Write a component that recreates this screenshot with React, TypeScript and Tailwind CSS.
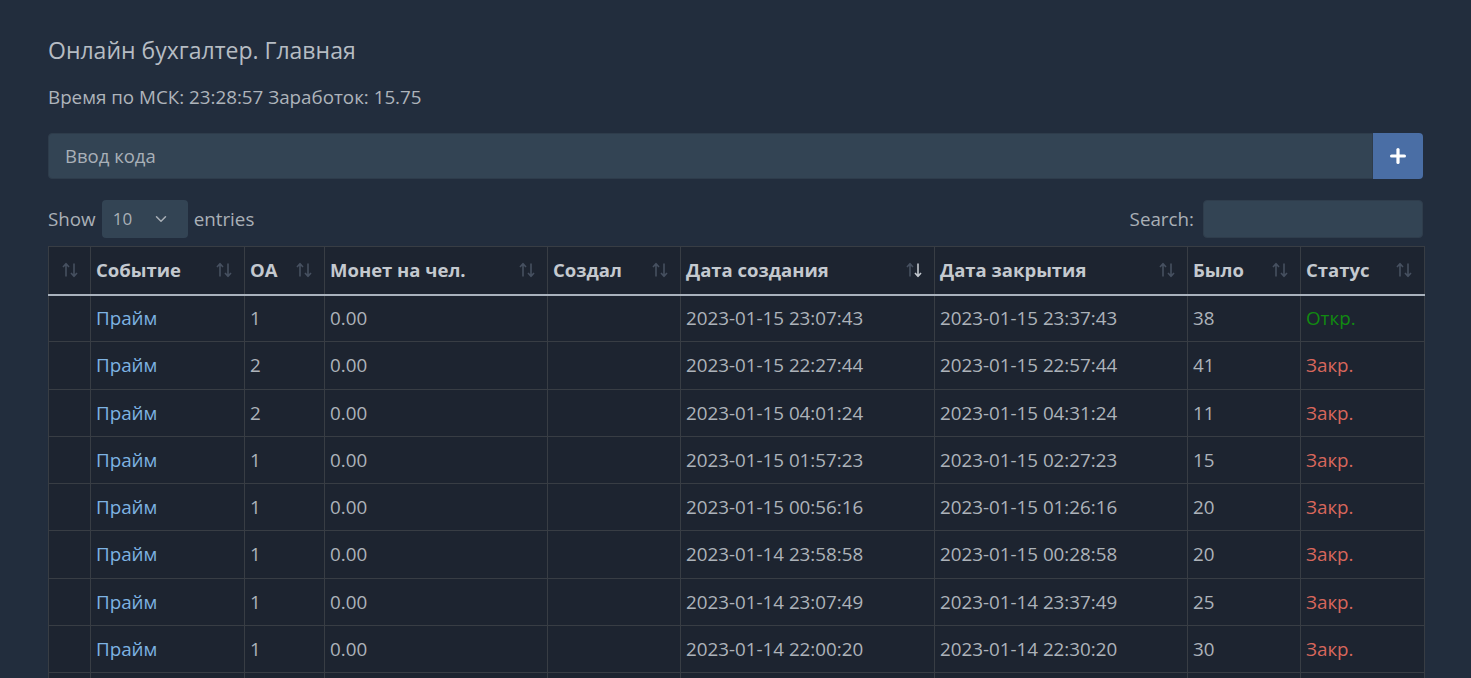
import { ChevronDown, Plus } from 'lucide-react';

type Row = {
	oa: number;
	created: string;
	closed: string;
	was: number;
	open: boolean;
};

const rows: Row[] = [
	{ oa: 1, created: '2023-01-15 23:07:43', closed: '2023-01-15 23:37:43', was: 38, open: true },
	{ oa: 2, created: '2023-01-15 22:27:44', closed: '2023-01-15 22:57:44', was: 41, open: false },
	{ oa: 2, created: '2023-01-15 04:01:24', closed: '2023-01-15 04:31:24', was: 11, open: false },
	{ oa: 1, created: '2023-01-15 01:57:23', closed: '2023-01-15 02:27:23', was: 15, open: false },
	{ oa: 1, created: '2023-01-15 00:56:16', closed: '2023-01-15 01:26:16', was: 20, open: false },
	{ oa: 1, created: '2023-01-14 23:58:58', closed: '2023-01-15 00:28:58', was: 20, open: false },
	{ oa: 1, created: '2023-01-14 23:07:49', closed: '2023-01-14 23:37:49', was: 25, open: false },
	{ oa: 1, created: '2023-01-14 22:00:20', closed: '2023-01-14 22:30:20', was: 30, open: false },
	{ oa: 1, created: '2023-01-14 21:12:05', closed: '2023-01-14 21:42:05', was: 18, open: false },
	{ oa: 2, created: '2023-01-14 20:03:51', closed: '2023-01-14 20:33:51', was: 22, open: false },
];

const columns = [
	{ title: '', w: 'w-[42px]' },
	{ title: 'Событие', w: 'w-[154px]' },
	{ title: 'OA', w: 'w-[80px]' },
	{ title: 'Монет на чел.', w: 'w-[223px]' },
	{ title: 'Создал', w: 'w-[133px]' },
	{ title: 'Дата создания', w: 'w-[254px]', sorted: true },
	{ title: 'Дата закрытия', w: 'w-[253px]' },
	{ title: 'Было', w: 'w-[113px]' },
	{ title: 'Статус', w: 'w-[124px]' },
];

// two thin arrows like the DataTables sorting glyphs
const SortIcon = ({ active }: { active?: boolean }) => (
	<svg
		className="absolute right-[12px] top-1/2 -translate-y-1/2"
		width="16"
		height="15"
		viewBox="0 0 16 15"
		fill="none"
		strokeWidth="1.6"
	>
		<path d="M4 14V1.5M1 4.5L4 1.2L7 4.5" stroke="#465060" />
		<path
			d="M12 1V13.5M9 10.5L12 13.8L15 10.5"
			stroke={active ? '#c3c8cf' : '#465060'}
		/>
	</svg>
);

const cell = 'border border-[#383d44] px-[5px]';

export default function App() {
	return (
		<div
			className="min-h-screen bg-[#222d3d] px-12 pt-[36px] text-[#adb3ba]"
			style={{ fontFamily: '"Open Sans", "Noto Sans", sans-serif' }}
		>
			<h1 className="text-[23px] leading-[28px] text-[#b6bcc3]">Онлайн бухгалтер. Главная</h1>
			<p className="mt-[21px] text-[18.8px] leading-[24px] text-[#aeb4bb]">
				Время по МСК: 23:28:57 Заработок: 15.75
			</p>

			<div className="mt-[24px] flex h-[46px]">
				<div className="flex flex-1 items-center rounded-l-[4px] border border-[#2e3c4b] bg-[#334454] px-4 text-[18.5px] text-[#a9b0b8]">
					Ввод кода
				</div>
				<button className="flex w-[50px] items-center justify-center rounded-r-[4px] bg-[#4a6ea5] text-white">
					<Plus size={22} strokeWidth={3.5} />
				</button>
			</div>

			<div className="mt-[21px] flex h-[38px] items-center justify-between text-[18.8px] text-[#aab0b7]">
				<div className="flex items-center gap-[6px]">
					<span>Show</span>
					<div className="flex h-[38px] w-[86px] items-center justify-between rounded-[4px] bg-[#334454] pl-[11px] pr-[18px] text-[17px] text-[#aab0b7]">
						<span>10</span>
						<ChevronDown size={18} strokeWidth={2} />
					</div>
					<span>entries</span>
				</div>
				<div className="flex items-center gap-[9px]">
					<span>Search:</span>
					<div className="h-[38px] w-[220px] rounded-[4px] border border-[#2f3d4c] bg-[#334454]" />
				</div>
			</div>

			<table className="mt-[8px] w-[1376px] table-fixed border-collapse bg-[#1d2430] text-[18.8px]">
				<thead>
					<tr className="h-[48px] border-b-2 border-b-[#a9b2bd]">
						{columns.map((c, i) => (
							<th
								key={i}
								className={`${c.w} relative border border-[#383d44] border-b-[#a9b2bd] px-[5px] text-left text-[18.5px] font-bold text-[#c4c9cf]`}
							>
								{c.title}
								<SortIcon active={c.sorted} />
							</th>
						))}
					</tr>
				</thead>
				<tbody>
					{rows.map((r, i) => (
						<tr key={i} className="h-[47.25px]">
							<td className={cell} />
							<td className={`${cell} text-[#7eb3e3]`}>Прайм</td>
							<td className={cell}>{r.oa}</td>
							<td className={cell}>0.00</td>
							<td className={cell} />
							<td className={cell}>{r.created}</td>
							<td className={cell}>{r.closed}</td>
							<td className={cell}>{r.was}</td>
							<td className={`${cell} ${r.open ? 'text-[#118a11]' : 'text-[#d8675c]'}`}>
								{r.open ? 'Откр.' : 'Закр.'}
							</td>
						</tr>
					))}
				</tbody>
			</table>
		</div>
	);
}
